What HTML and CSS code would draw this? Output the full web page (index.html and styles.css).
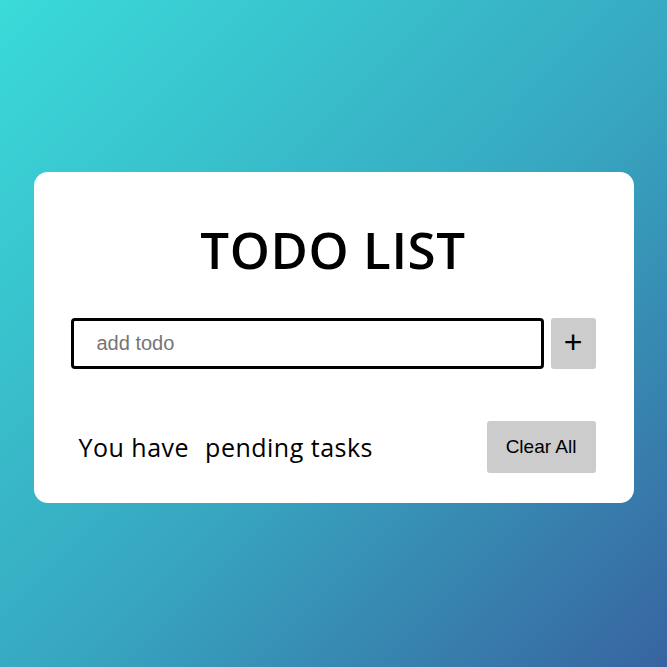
FILE: index.html
```html
<!DOCTYPE html>
<html lang="en">
<head>
<meta charset="utf-8">
<title>Todo List</title>
<link rel="stylesheet" href="styles.css">
</head>
<body>
<main class="page">
  <section class="card">
    <h1 class="title">TODO LIST</h1>
    <div class="add-row">
      <input class="todo-input" type="text" placeholder="add todo">
      <button class="add-btn" type="button">+</button>
    </div>
    <div class="footer-row">
      <p class="pending">You have <span class="count"></span> pending tasks</p>
      <button class="clear-btn" type="button">Clear All</button>
    </div>
  </section>
</main>
</body>
</html>
```

FILE: styles.css
```css
* { box-sizing: border-box; }
html, body { margin: 0; padding: 0; }
body {
  min-height: 667px;
  background: linear-gradient(to bottom right, #3adbd9 0%, #37a6c0 55%, #3764a0 100%);
  font-family: "Open Sans", "Liberation Sans", sans-serif;
}
.page {
  display: flex;
  justify-content: center;
  padding-top: 172px;
  min-height: 667px;
}
.card {
  width: 600px;
  height: 331px;
  background: #fff;
  border-radius: 14px;
  padding: 0 38px 0 37px;
  display: flex;
  flex-direction: column;
}
.title {
  margin: 47px 0 0;
  text-align: center;
  font-family: "Open Sans", sans-serif;
  font-weight: 600;
  font-size: 51px;
  letter-spacing: 0.6px;
  line-height: 60px;
  color: #000;
}
.add-row {
  display: flex;
  gap: 7px;
  margin-top: 39px;
  height: 51px;
}
.todo-input {
  flex: 1;
  height: 51px;
  border: 3px solid #000;
  border-radius: 4px;
  padding: 0 0 0 23px;
  font-family: "Liberation Sans", Arial, sans-serif;
  font-size: 20px;
  outline: none;
}
.todo-input::placeholder { color: #757575; }
.add-btn {
  width: 45px;
  height: 51px;
  border: none;
  border-radius: 3px;
  background: #cccccc;
  font-family: "Liberation Sans", Arial, sans-serif;
  font-size: 32px;
  line-height: 1;
  padding: 0 0 3px;
  color: #000;
}
.footer-row {
  display: flex;
  justify-content: space-between;
  align-items: center;
  margin-top: 52px;
}
.pending {
  margin: 0 0 0 8px;
  font-family: "Open Sans", sans-serif;
  font-size: 25px;
  letter-spacing: 0.5px;
  color: #000;
}
.count { display: inline-block; width: 2px; }
.clear-btn {
  width: 109px;
  height: 52px;
  border: none;
  border-radius: 3px;
  background: #cccccc;
  font-family: "Liberation Sans", Arial, sans-serif;
  font-size: 19px;
  color: #000;
  padding: 0;
}
```
